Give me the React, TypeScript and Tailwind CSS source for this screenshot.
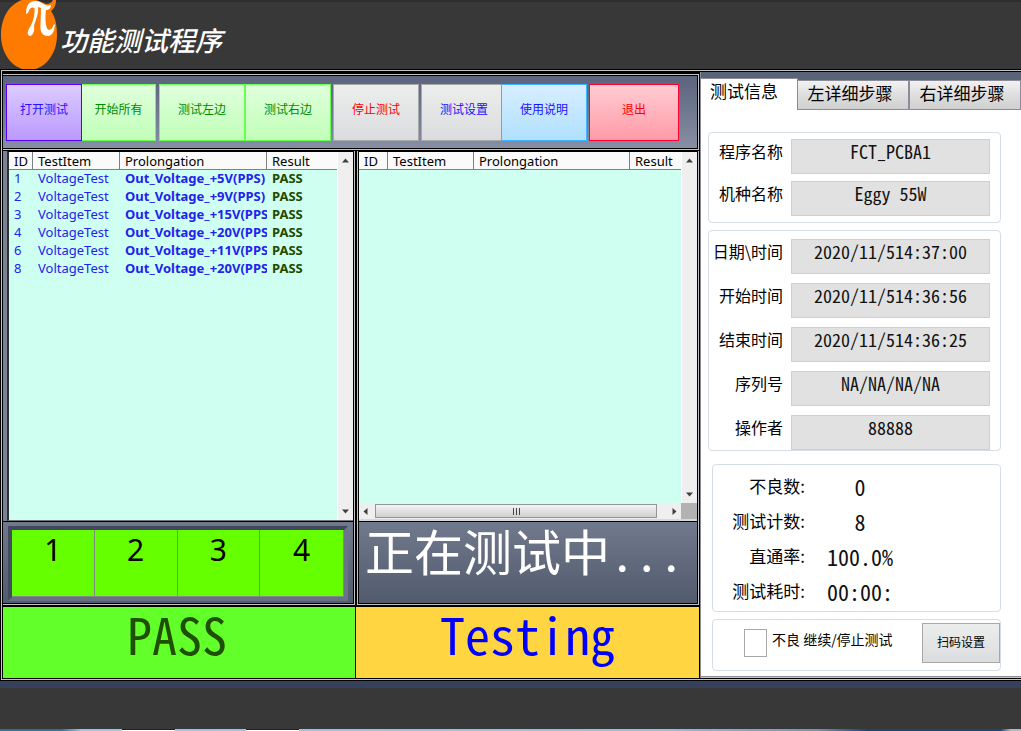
import React from "react";

const UI = "font-['Noto_Sans','Noto_Sans_CJK_SC',sans-serif]";
const CJK = "font-['Noto_Sans_CJK_SC',sans-serif]";
const MONO = "font-['Noto_Sans_Mono_CJK_SC','Noto_Sans_CJK_SC',monospace]";

type ResultRow = { id: number; item: string; detail: string; result: string };

const leftRows: ResultRow[] = [
  { id: 1, item: "VoltageTest", detail: "Out_Voltage_+5V(PPS)", result: "PASS" },
  { id: 2, item: "VoltageTest", detail: "Out_Voltage_+9V(PPS)", result: "PASS" },
  { id: 3, item: "VoltageTest", detail: "Out_Voltage_+15V(PPS", result: "PASS" },
  { id: 4, item: "VoltageTest", detail: "Out_Voltage_+20V(PPS", result: "PASS" },
  { id: 6, item: "VoltageTest", detail: "Out_Voltage_+11V(PPS", result: "PASS" },
  { id: 8, item: "VoltageTest", detail: "Out_Voltage_+20V(PPS", result: "PASS" },
];

function Logo() {
  return (
    <svg width="58" height="70" viewBox="0 0 58 70" aria-hidden="true">
      <path
        d="M22 0H36C40 1 43 3 46 4C50 4 52 2 53 0H56C56 4 55 8 51 11C56 18 57 27 57 35C57 55 44 70 29 70C14 70 1 55 1 35C1 17 10 4 22 0Z"
        fill="#ff7b00"
      />
      <path
        d="M26 14C26 5 29 1 36 1C42 1 44 7 51 5C51 8 49 10 46 10C45 17 45 29 49 30C52 30 53 26 54 24L55 25C54 32 52 36 48 36C41 36 40 30 40.500 24L41 8L38 7C39 14 35 21 34 26C35 30 33 36 30 36C26 35 28 30 30 27C33 22 35 15 34.500 8C31 6 29 10 28 13Z"
        fill="#fff"
      />
    </svg>
  );
}

function ToolButton({ label, tone }: { label: string; tone: string }) {
  return (
    <button type="button" className={`h-[57px] shrink-0 border pb-[7px] text-xs ${CJK} ${tone}`}>
      {label}
    </button>
  );
}

function Arrow({ dir }: { dir: "up" | "down" | "left" | "right" }) {
  const d = {
    up: "M0 4L3.5 0L7 4Z",
    down: "M0 0L3.5 4L7 0Z",
    left: "M4 0L0 3.5L4 7Z",
    right: "M0 0L4 3.5L0 7Z",
  }[dir];
  return (
    <svg width="7" height="7" viewBox={dir === "up" || dir === "down" ? "0 -1.5 7 7" : "-1.5 0 7 7"} aria-hidden="true">
      <path d={d} fill="#404040" />
    </svg>
  );
}

function VerticalScroll() {
  return (
    <div className="flex w-4 shrink-0 flex-col items-center justify-between border-l border-white bg-[#efefef] py-[5px]">
      <Arrow dir="up" />
      <Arrow dir="down" />
    </div>
  );
}

function ResultTable({ rows, cols }: { rows: ResultRow[]; cols: string[] }) {
  return (
    <table className={`w-full table-fixed border-separate border-spacing-0 text-[13px] leading-4 ${UI}`}>
      <colgroup>
        {cols.map((c, i) => (
          <col key={i} className={c} />
        ))}
      </colgroup>
      <thead>
        <tr className="h-[18px] bg-[#fafafa]">
          {["ID", "TestItem", "Prolongation", "Result"].map((h) => (
            <th
              key={h}
              className="border-r border-b border-[#808080] py-0 pr-0 pl-[5px] text-left font-normal text-black last:border-r-0"
            >
              {h}
            </th>
          ))}
        </tr>
      </thead>
      <tbody>
        {rows.map((r) => (
          <tr key={r.id} className="h-[18px] text-[#2222ee]">
            <td className="pt-0 pr-0 pb-[2px] pl-[5px]">{r.id}</td>
            <td className="pt-0 pr-0 pb-[2px] pl-[5px]">{r.item}</td>
            <td className="overflow-hidden pt-0 pr-0 pb-[2px] pl-[5px] font-bold whitespace-nowrap">{r.detail}</td>
            <td className="pt-0 pr-0 pb-[2px] pl-[5px] font-bold text-[#1f4a00]">{r.result}</td>
          </tr>
        ))}
      </tbody>
    </table>
  );
}

function Field({ id, label, value }: { id: string; label: string; value: string }) {
  return (
    <div className="flex items-start gap-2">
      <label htmlFor={id} className={`w-[74px] shrink-0 text-right text-base leading-6 whitespace-nowrap ${CJK}`}>
        {label}
      </label>
      <input
        id={id}
        readOnly
        value={value}
        className={`h-[35px] w-full min-w-0 border border-[#cfcfcf] bg-[#e1e1e1] pb-3 text-center text-lg leading-5 text-[#111] outline-none ${MONO}`}
      />
    </div>
  );
}

function Stat({ id, label, value }: { id: string; label: string; value: string }) {
  return (
    <div className="flex h-[35px] items-center gap-5">
      <label htmlFor={id} className={`w-[92px] text-right text-[17px] ${CJK}`}>
        {label}
      </label>
      <output id={id} className={`w-[70px] text-center text-[22px] leading-8 text-[#111] ${MONO}`}>
        {value}
      </output>
    </div>
  );
}

const GREEN = "border-[#66ff52] bg-linear-to-b from-[#dfffdc] to-[#c2ffb8] text-[#008a00]";
const GRAY = "border-[#a6a8aa] bg-linear-to-b from-[#eceeed] to-[#dbdcde]";

export default function App() {
  return (
    <div className="flex min-h-screen flex-col bg-[#383838] text-black">
      <header className="flex h-[69px] shrink-0 items-start gap-[2px] border-t-2 border-[#2f2f2f]">
        <div className="-mt-[2px]">
          <Logo />
        </div>
        <h1 className={`pt-[18px] text-[27px] leading-10 font-medium text-white italic ${CJK}`}>功能测试程序</h1>
      </header>

      <main className="grid flex-1 grid-cols-[minmax(0,697fr)_minmax(0,321fr)] border-3 border-r-0 border-double border-black bg-[#c4c4c4]">
        <section className="flex flex-col bg-black pt-px">
          <nav className="border-3 border-l-0 border-double border-black bg-[#c4c4c4]">
            <div className="flex h-[72px] items-center gap-[2px] bg-linear-to-b from-[#5b647c] to-[#868fa3] pt-px pl-[3px]">
              <div className="mr-px flex">
                <ToolButton
                  label="打开测试"
                  tone="w-[76px] border-[#5500ff] bg-linear-to-b from-[#dccbff] to-[#bb99ff] text-[#2a10ff]"
                />
                <ToolButton label="开始所有" tone={`w-[74px] border-l-0 ${GREEN}`} />
              </div>
              <div className="flex">
                <ToolButton label="测试左边" tone={`w-[86px] ${GREEN}`} />
                <ToolButton label="测试右边" tone={`w-[86px] ${GREEN}`} />
              </div>
              <ToolButton label="停止测试" tone={`w-[86px] text-[#ff0000] ${GRAY}`} />
              <div className="flex">
                <ToolButton label="测试设置" tone={`-mr-[6px] w-[86px] text-[#1a10ff] ${GRAY}`} />
                <ToolButton
                  label="使用说明"
                  tone="w-[86px] border-[#3fb4ff] bg-linear-to-b from-[#d7eeff] to-[#b0e0ff] text-[#1a10ff]"
                />
              </div>
              <ToolButton
                label="退出"
                tone="w-[90px] border-[#ff0033] bg-linear-to-b from-[#ffccd2] to-[#ff9aa8] text-[#ff0000]"
              />
            </div>
          </nav>

          <div className="grid flex-1 grid-cols-[minmax(0,353fr)_minmax(0,344fr)]">
            <section className="flex flex-col border-r-3 border-b-3 border-double border-black bg-[#c4c4c4]">
              <div className="flex flex-1 bg-[#7a8296] pl-1">
                <div className="flex flex-1 border border-r-0 border-l-2 border-t-black border-b-[#777] border-l-[#333] bg-[#cffff0]">
                  <div className="min-w-0 flex-1">
                    <ResultTable rows={leftRows} cols={["w-[24px]", "w-[87px]", "w-[147px]", "w-auto"]} />
                  </div>
                  <VerticalScroll />
                </div>
              </div>
              <div className="h-[82px] border-t border-black bg-linear-to-b from-[#717a8d] to-[#525b6e] pt-1 pr-[5px] pl-[5px]">
                <div className="border-4 border-t-[#3f495b] border-r-[#69738a] border-b-[#667086] border-l-[#434d60]">
                  <ol className={`grid h-[67px] grid-cols-4 border-r border-b border-[#808a80] bg-[#66ff00] ${UI}`}>
                    {["1", "2", "3", "4"].map((n) => (
                      <li key={n} className="border-r border-[#808a80] text-center text-3xl leading-10 last:border-r-0">
                        {n}
                      </li>
                    ))}
                  </ol>
                </div>
              </div>
            </section>

            <section className="flex flex-col border-x-3 border-b-3 border-double border-black bg-[#c4c4c4]">
              <div className="flex flex-1 flex-col border-t border-b-2 border-t-black border-b-[#d8d8d8]">
                <div className="flex flex-1 bg-[#cffff0]">
                  <div className="min-w-0 flex-1">
                    <ResultTable rows={[]} cols={["w-[29px]", "w-[86px]", "w-[156px]", "w-auto"]} />
                  </div>
                  <VerticalScroll />
                </div>
                <div className="flex h-4">
                  <div className="flex flex-1 items-center bg-[#efefef] px-[3px]">
                    <Arrow dir="left" />
                    <div className="mr-[14px] ml-[6px] flex h-[14px] flex-1 items-center justify-center gap-[2px] border border-[#959595] bg-linear-to-b from-[#f4f4f4] to-[#cfcfcf]">
                      <i className="h-[7px] w-px bg-[#444]" />
                      <i className="h-[7px] w-px bg-[#444]" />
                      <i className="h-[7px] w-px bg-[#444]" />
                    </div>
                    <Arrow dir="right" />
                  </div>
                  <div className="w-4 bg-[#b2b2b2]" />
                </div>
              </div>
              <div className="h-[82px] border-t border-black bg-linear-to-b from-[#717a8d] to-[#525b6e] pl-[6px]">
                <p className={`text-[49px] leading-[56px] whitespace-nowrap text-white ${MONO}`}>正在测试中...</p>
              </div>
            </section>
          </div>

          <div
            className={`grid h-[72px] shrink-0 grid-cols-[minmax(0,353fr)_minmax(0,344fr)] border-t border-black text-center text-[50px] leading-[52px] ${MONO}`}
          >
            <div className="border-r border-black bg-[#63ff2b] pr-1 text-[#1f4f00]">PASS</div>
            <div className="border-r border-black bg-[#ffd642] text-[#0000ff]">Testing</div>
          </div>
        </section>

        <section className="flex flex-col border-l border-[#8b8b99] bg-white">
          <div role="tablist" className={`flex shrink-0 items-end bg-[#5a6479] pt-[6px] text-[17px] ${CJK}`}>
            <button
              type="button"
              role="tab"
              aria-selected="true"
              className="h-8 w-[97px] shrink-0 border-t border-r border-[#8b8b99] bg-white pr-[10px] pb-2 leading-5"
            >
              测试信息
            </button>
            {["左详细步骤", "右详细步骤"].map((t) => (
              <button
                key={t}
                type="button"
                role="tab"
                aria-selected="false"
                className="h-[30px] w-28 shrink-0 border border-r-2 border-l-0 border-[#8b8b99] bg-linear-to-b from-[#f2f2f2] via-[#dedede] to-[#d0d0d0] pr-[6px] pb-1 leading-5"
              >
                {t}
              </button>
            ))}
          </div>

          <form
            className="flex flex-1 flex-col border-b border-[#8b8b99] pt-[22px] pr-5 pl-[7px]"
            onSubmit={(e) => e.preventDefault()}
          >
            <div className="flex flex-col gap-[7px] rounded border border-[#d5dde5] px-0 pt-[6px] pr-[10px] pb-[6px]">
              <Field id="program" label="程序名称" value="FCT_PCBA1" />
              <Field id="model" label="机种名称" value="Eggy 55W" />
            </div>
            <div className="mt-[7px] flex flex-col gap-[9px] rounded border border-[#d5dde5] pt-[8px] pr-[10px]">
              <Field id="datetime" label="日期\时间" value="2020/11/514:37:00" />
              <Field id="start" label="开始时间" value="2020/11/514:36:56" />
              <Field id="end" label="结束时间" value="2020/11/514:36:25" />
              <Field id="serial" label="序列号" value="NA/NA/NA/NA" />
              <Field id="operator" label="操作者" value="88888" />
            </div>
            <div className="mt-[13px] ml-1 rounded border border-[#d5dde5] py-[3px]">
              <Stat id="bad" label="不良数:" value="0" />
              <Stat id="count" label="测试计数:" value="8" />
              <Stat id="rate" label="直通率:" value="100.0%" />
              <Stat id="elapsed" label="测试耗时:" value="00:00:" />
            </div>
            <div className="mt-[7px] ml-1 flex h-[52px] items-start rounded border border-[#d5dde5] pt-[3px] pl-[31px]">
              <input
                id="stop"
                type="checkbox"
                className="mt-[6px] h-7 w-[23px] shrink-0 appearance-none border border-[#a6a8aa] bg-white checked:bg-[#c2ffb8]"
              />
              <label htmlFor="stop" className={`mt-[6px] ml-[5px] text-sm whitespace-nowrap ${CJK}`}>
                不良 继续/停止测试
              </label>
              <button type="button" className={`ml-auto h-10 w-[78px] shrink-0 border pb-[2px] text-xs ${CJK} ${GRAY}`}>
                扫码设置
              </button>
            </div>
          </form>
          <div className="h-px bg-[#c4c4c4]" />
        </section>
      </main>

      <footer className="flex h-[50px] shrink-0 flex-col justify-between">
        <div className="h-[7px] bg-[#36405a]" />
        <div className="flex h-[2px] bg-[linear-gradient(to_right,#2d7395_0%,#2d7395_6%,#a5c3de_8%,#9dbbd8_65%,#8090a8_80%,#1d4470_85%,#1d4470_98%,#b0b8c4_99%)]">
          <span className="ml-[122px] w-[53px] border-t border-[#222] bg-white" />
          <span className="ml-[71px] w-[53px] border-t border-[#222] bg-white" />
        </div>
      </footer>
    </div>
  );
}
